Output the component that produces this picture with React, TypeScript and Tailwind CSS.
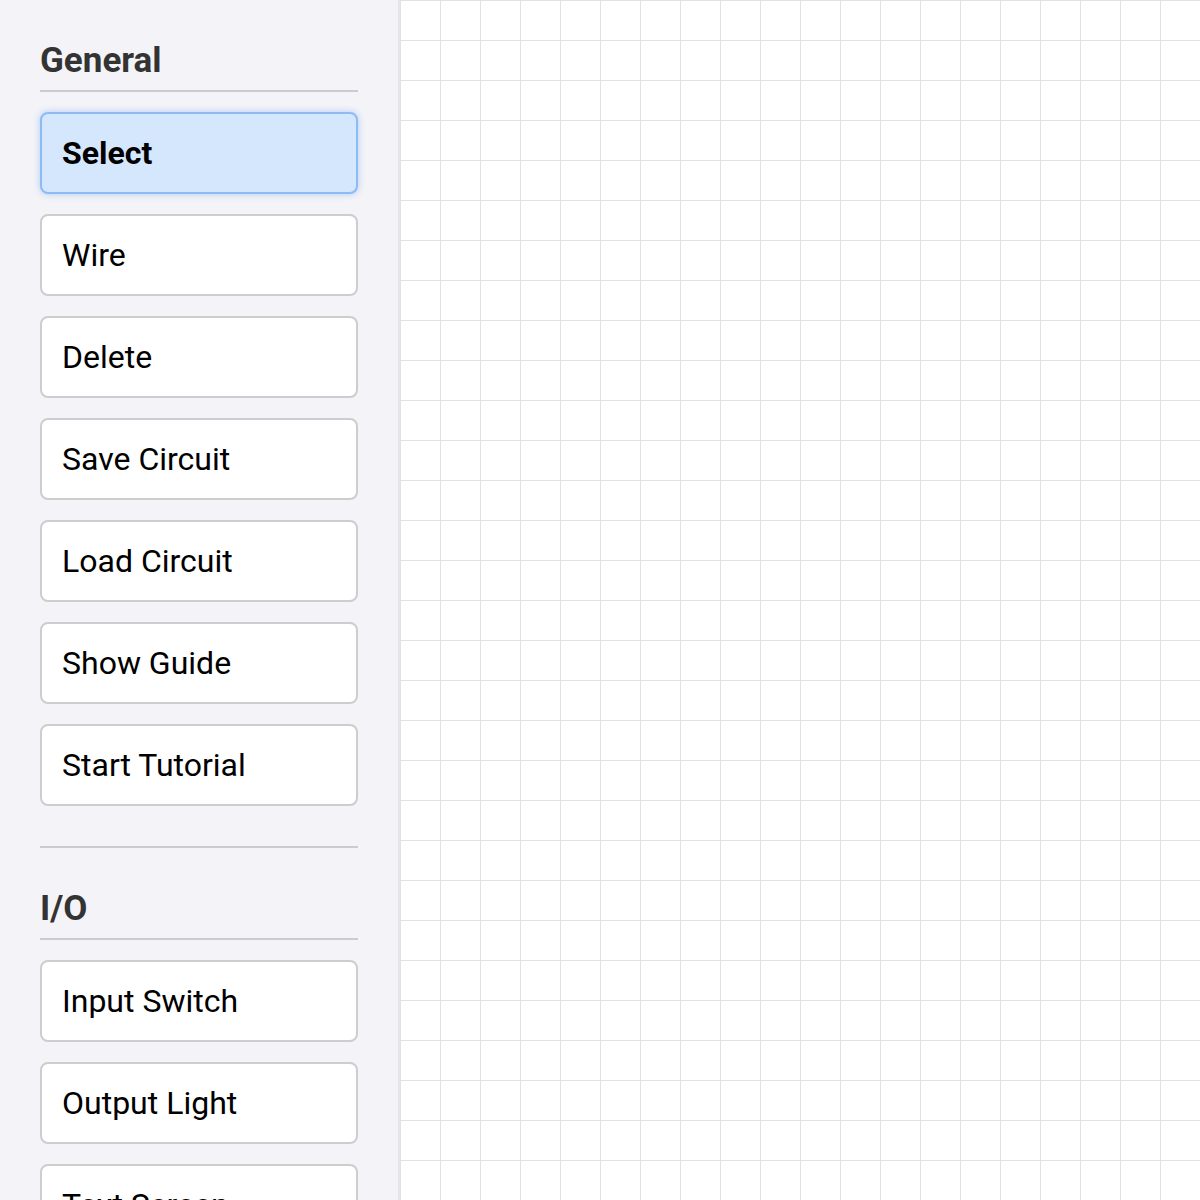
import React from "react";

const general = ["Select", "Wire", "Delete", "Save Circuit", "Load Circuit", "Show Guide", "Start Tutorial"];
const io = ["Input Switch", "Output Light", "Text Screen", "Keyboard"];

function Btn({ label, active }: { label: string; active?: boolean }) {
  return (
    <div
      className={
        active
          ? "h-[82px] shrink-0 flex items-center px-[20px] rounded-[8px] border-2 border-[#8dbcf5] bg-[#d5e7fd] shadow-[0_0_6px_rgba(90,150,240,0.45)] text-[32px] font-bold text-black"
          : "h-[82px] shrink-0 flex items-center px-[20px] rounded-[8px] border-2 border-[#cdcdd0] bg-white text-[32px] text-black"
      }
    >
      {label}
    </div>
  );
}

function Section({ title, items, activeFirst }: { title: string; items: string[]; activeFirst?: boolean }) {
  return (
    <div className="flex flex-col">
      <div className="pt-10 h-[82px] text-[35px] leading-[42px] font-bold text-[#333333] shrink-0">{title}</div>
      <div className="mt-2 h-[2px] bg-[#cbcbd0] shrink-0" />
      <div className="mt-5 flex flex-col gap-5">
        {items.map((it, i) => (
          <Btn key={it} label={it} active={activeFirst && i === 0} />
        ))}
      </div>
    </div>
  );
}

export default function App() {
  return (
    <div
      className="flex h-[1200px] w-[1200px] overflow-hidden"
      style={{ fontFamily: "Roboto, 'Noto Sans', sans-serif" }}
    >
      <div className="w-[400px] shrink-0 h-full bg-[#f3f3f8] border-r-2 border-[#e5e5ec] pl-10 pr-10 flex flex-col overflow-hidden">
        <Section title="General" items={general} activeFirst />
        <div className="mt-10 h-[2px] bg-[#cbcbd0] shrink-0" />
        <Section title="I/O" items={io} />
      </div>
      <div className="flex-1 h-full bg-white bg-[linear-gradient(to_right,#e2e2e2_1px,transparent_1px),linear-gradient(to_bottom,#e2e2e2_1px,transparent_1px)] bg-[size:40px_40px]" />
    </div>
  );
}
